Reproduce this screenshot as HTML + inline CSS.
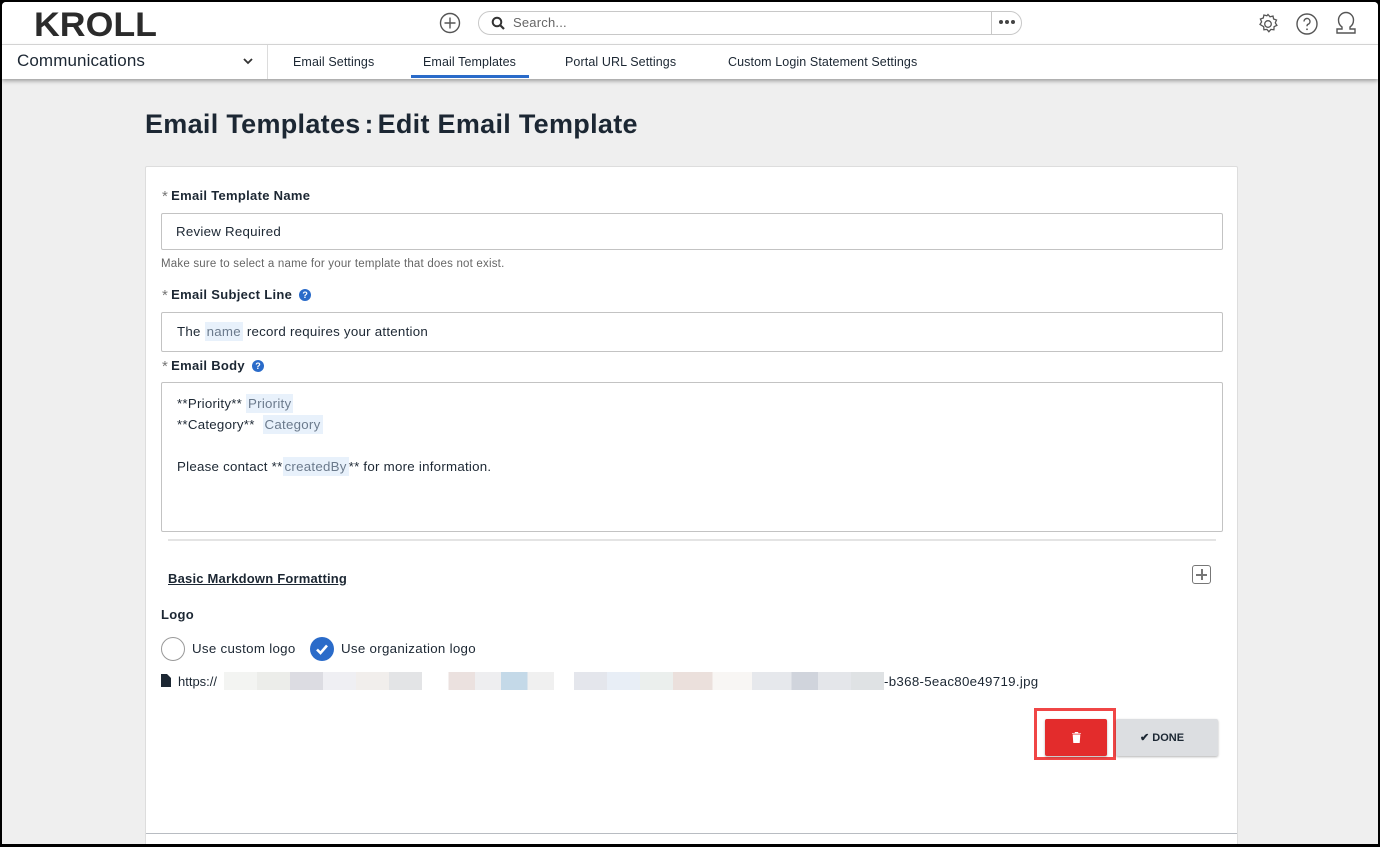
<!DOCTYPE html>
<html><head><meta charset="utf-8"><style>
*{box-sizing:border-box;margin:0;padding:0}
html,body{width:1380px;height:847px;overflow:hidden}
body{background:#000;font-family:"Liberation Sans",sans-serif;color:#1c2733;position:relative}
#app{position:absolute;left:2px;top:2px;width:1376px;height:842px;background:#efefef;overflow:hidden;border-radius:4px 4px 0 0}
.a{position:absolute}
#hdr{left:0;top:0;width:1376px;height:43px;background:#fff;border-bottom:1px solid #dcdcdc}
#nav{left:0;top:43px;width:1376px;height:34px;background:#fff;box-shadow:0 2px 4px rgba(0,0,0,.35)}
.tab{position:absolute;top:10px;font-size:12.5px;color:#1c2733;letter-spacing:.1px}
.lbl{position:absolute;font-size:13px;font-weight:bold;color:#1c2733;letter-spacing:.3px}
.lbl .st{color:#777;font-weight:normal;font-size:15px;margin-right:3px;position:relative;top:1px}
.inp{position:absolute;left:15px;width:1062px;border:1px solid #c3c3c3;border-radius:2px;background:#fff;font-size:13.3px;letter-spacing:.25px}
.tk{background:#e8f1fb;color:#6b7a8c;padding:2px 2px}
.q{display:inline-block;width:12px;height:12px;border-radius:50%;background:#2a6bc9;color:#fff;font-size:9px;font-weight:bold;text-align:center;line-height:12px;margin-left:7px;vertical-align:1px;letter-spacing:0}
</style></head><body><div id="app">
<div id="hdr" class="a">
 <div class="a" style="left:32px;top:4px;font-size:34px;font-weight:bold;letter-spacing:0;color:#2b2b2b;transform:scaleX(1.05);transform-origin:left">KROLL</div>
 <svg class="a" style="left:437px;top:10px" width="22" height="22" viewBox="0 0 22 22"><circle cx="11" cy="11" r="9.5" fill="none" stroke="#555" stroke-width="1.4"/><path d="M11 5.5v11M5.5 11h11" stroke="#555" stroke-width="1.4"/></svg>
 <div class="a" style="left:476px;top:9px;width:544px;height:24px;border:1px solid #c8c8c8;border-radius:12px"></div>
 <svg class="a" style="left:489px;top:14px" width="14" height="14" viewBox="0 0 14 14"><circle cx="6" cy="6" r="4.3" fill="none" stroke="#333" stroke-width="2"/><path d="M9 9l4 4" stroke="#333" stroke-width="2.2"/></svg>
 <div class="a" style="left:511px;top:13px;font-size:13px;color:#666;letter-spacing:.2px">Search...</div>
 <div class="a" style="left:989px;top:10px;width:1px;height:22px;background:#c8c8c8"></div>
 <svg class="a" style="left:996px;top:17px" width="18" height="6" viewBox="0 0 18 6"><circle cx="3" cy="3" r="2" fill="#444"/><circle cx="9" cy="3" r="2" fill="#444"/><circle cx="15" cy="3" r="2" fill="#444"/></svg>
 <svg class="a" style="left:1254px;top:10px" width="24" height="24" viewBox="0 0 24 24"><path d="M12 2.5l2 2.3 3-.8.6 3 2.9 1-1.2 2.8 1.6 2.6-2.8 1.3-.2 3.1-3-.4-2 2.3-2-2.3-3 .4-.2-3.1L4 12.4 5.6 9.8 4.4 7l2.9-1 .6-3 3 .8z" fill="none" stroke="#555" stroke-width="1.3"/><circle cx="12" cy="12" r="3.3" fill="none" stroke="#555" stroke-width="1.3"/></svg>
 <svg class="a" style="left:1293px;top:10px" width="24" height="24" viewBox="0 0 24 24"><circle cx="12" cy="12" r="10" fill="none" stroke="#555" stroke-width="1.4"/><path d="M9 9.5a3 3 0 1 1 4 2.8c-.8.4-1 1-1 2" fill="none" stroke="#555" stroke-width="1.4"/><circle cx="12" cy="17.3" r=".9" fill="#555"/></svg>
 <svg class="a" style="left:1332px;top:9px" width="24" height="26" viewBox="0 0 24 26"><path d="M8 16c-3-2-3.5-5-3.5-7a7.5 7.5 0 0 1 15 0c0 2-.5 5-3.5 7v2h5v4H3v-4h5z" fill="none" stroke="#555" stroke-width="1.4"/></svg>
</div>
<div id="nav" class="a">
 <div class="a" style="left:15px;top:6px;font-size:17px;color:#1c2733;letter-spacing:.1px">Communications</div>
 <svg class="a" style="left:241px;top:13px" width="10" height="7" viewBox="0 0 10 7"><path d="M1 1l4 4 4-4" fill="none" stroke="#333" stroke-width="1.8"/></svg>
 <div class="a" style="left:265px;top:0;width:1px;height:34px;background:#dcdcdc"></div>
 <div class="tab" style="left:291px">Email Settings</div>
 <div class="tab" style="left:421px">Email Templates</div>
 <div class="a" style="left:409px;top:30px;width:118px;height:3px;background:#2a6bc9"></div>
 <div class="tab" style="left:563px">Portal URL Settings</div>
 <div class="tab" style="left:726px">Custom Login Statement Settings</div>
</div>
<div class="a" style="left:143px;top:107px;font-size:27px;font-weight:bold;color:#1c2733;letter-spacing:.3px">Email Templates<span style="font-size:26px;margin:0 4px">:</span>Edit Email Template</div>
<div class="a" style="left:143px;top:164px;width:1093px;height:690px;background:#fff;border:1px solid #ddd;border-radius:2px">
 <div class="lbl" style="left:16px;top:20px"><span class="st">*</span>Email Template Name</div>
 <div class="inp" style="top:46px;height:37px;padding:10px 14px">Review Required</div>
 <div class="a" style="left:15px;top:91px;font-size:11.5px;color:#666;letter-spacing:.2px">Make sure to select a name for your template that does not exist.</div>
 <div class="lbl" style="left:16px;top:119px"><span class="st">*</span>Email Subject Line<span class="q">?</span></div>
 <div class="inp" style="top:145px;height:40px;padding:11px 15px">The <span class="tk">name</span> record requires your attention</div>
 <div class="lbl" style="left:16px;top:190px"><span class="st">*</span>Email Body<span class="q">?</span></div>
 <div class="inp" style="top:215px;height:150px;padding:10px 15px;line-height:21px">**Priority** <span class="tk">Priority</span><br>**Category** &nbsp;<span class="tk">Category</span><br><br>Please contact **<span class="tk">createdBy</span>** for more information.</div>
 <div class="a" style="left:22px;top:372px;width:1048px;height:2px;background:#e4e4e4"></div>
 <div class="a" style="left:22px;top:404px;font-size:13px;font-weight:bold;text-decoration:underline;color:#1c2733;letter-spacing:.2px">Basic Markdown Formatting</div>
 <div class="a" style="left:1046px;top:398px;width:19px;height:19px;border:1.5px solid #777;border-radius:3px"></div>
 <div class="a" style="left:1050px;top:407px;width:11px;height:1.5px;background:#777"></div>
 <div class="a" style="left:1055px;top:402px;width:1.5px;height:11px;background:#777"></div>
 <div class="lbl" style="left:15px;top:440px">Logo</div>
 <div class="a" style="left:15px;top:470px;width:24px;height:24px;border:1.5px solid #999;border-radius:50%"></div>
 <div class="a" style="left:46px;top:474px;font-size:13.3px;color:#1c2733;letter-spacing:.3px">Use custom logo</div>
 <svg class="a" style="left:164px;top:470px" width="24" height="24" viewBox="0 0 24 24"><circle cx="12" cy="12" r="12" fill="#2a6bc9"/><path d="M7 12.5l3.5 3.5L17 8.5" fill="none" stroke="#fff" stroke-width="2.6"/></svg>
 <div class="a" style="left:195px;top:474px;font-size:13.3px;color:#1c2733;letter-spacing:.3px">Use organization logo</div>
 <svg class="a" style="left:15px;top:507px" width="10" height="13" viewBox="0 0 10 13"><path d="M0 0h6l4 4v9H0z" fill="#1c2733"/></svg>
 <div class="a" style="left:32px;top:507px;font-size:13px">https://</div>
 <div class="a" style="left:78px;top:505px;width:660px;height:18px;background:linear-gradient(90deg,#f3f4f2 0 5%,#ecedea 5% 10%,#dcdce2 10% 15%,#efeff3 15% 20%,#f1eeec 20% 25%,#e3e4e6 25% 30%,#fff 30% 34%,#ebe1df 34% 38%,#eeeef0 38% 42%,#c4d9e8 42% 46%,#f0f0f0 46% 50%,#fff 50% 53%,#e4e6ec 53% 58%,#e8eef6 58% 63%,#ebefed 63% 68%,#ebe0dc 68% 74%,#f8f6f4 74% 80%,#e6e8ec 80% 86%,#d0d4dc 86% 90%,#e4e6ea 90% 95%,#dfe2e4 95% 100%)"></div>
 <div class="a" style="left:738px;top:507px;font-size:13.3px;letter-spacing:.3px">-b368-5eac80e49719.jpg</div>
 <div class="a" style="left:888px;top:541px;width:82px;height:52px;border:3px solid #f04646"></div>
 <div class="a" style="left:899px;top:552px;width:62px;height:37px;background:#e32c2c;border-radius:2px;box-shadow:0 1px 2px rgba(0,0,0,.3)"></div>
 <svg class="a" style="left:926px;top:565px" width="9" height="11" viewBox="0 0 10 12"><path d="M0 1.5h10M3.5 1.5V0h3v1.5M1.2 3h7.6l-.6 9H1.8z" fill="#fff" stroke="#fff" stroke-width=".8"/></svg>
 <div class="a" style="left:970px;top:552px;width:102px;height:37px;background:#dcdee1;border-radius:2px;box-shadow:0 1px 2px rgba(0,0,0,.3);font-size:11px;font-weight:bold;padding:12px 0 0 24px;color:#1c2733">✔ DONE</div>
 <div class="a" style="left:0;top:666px;width:1091px;height:1px;background:#b8bcc2"></div>
</div>
</div></body></html>
